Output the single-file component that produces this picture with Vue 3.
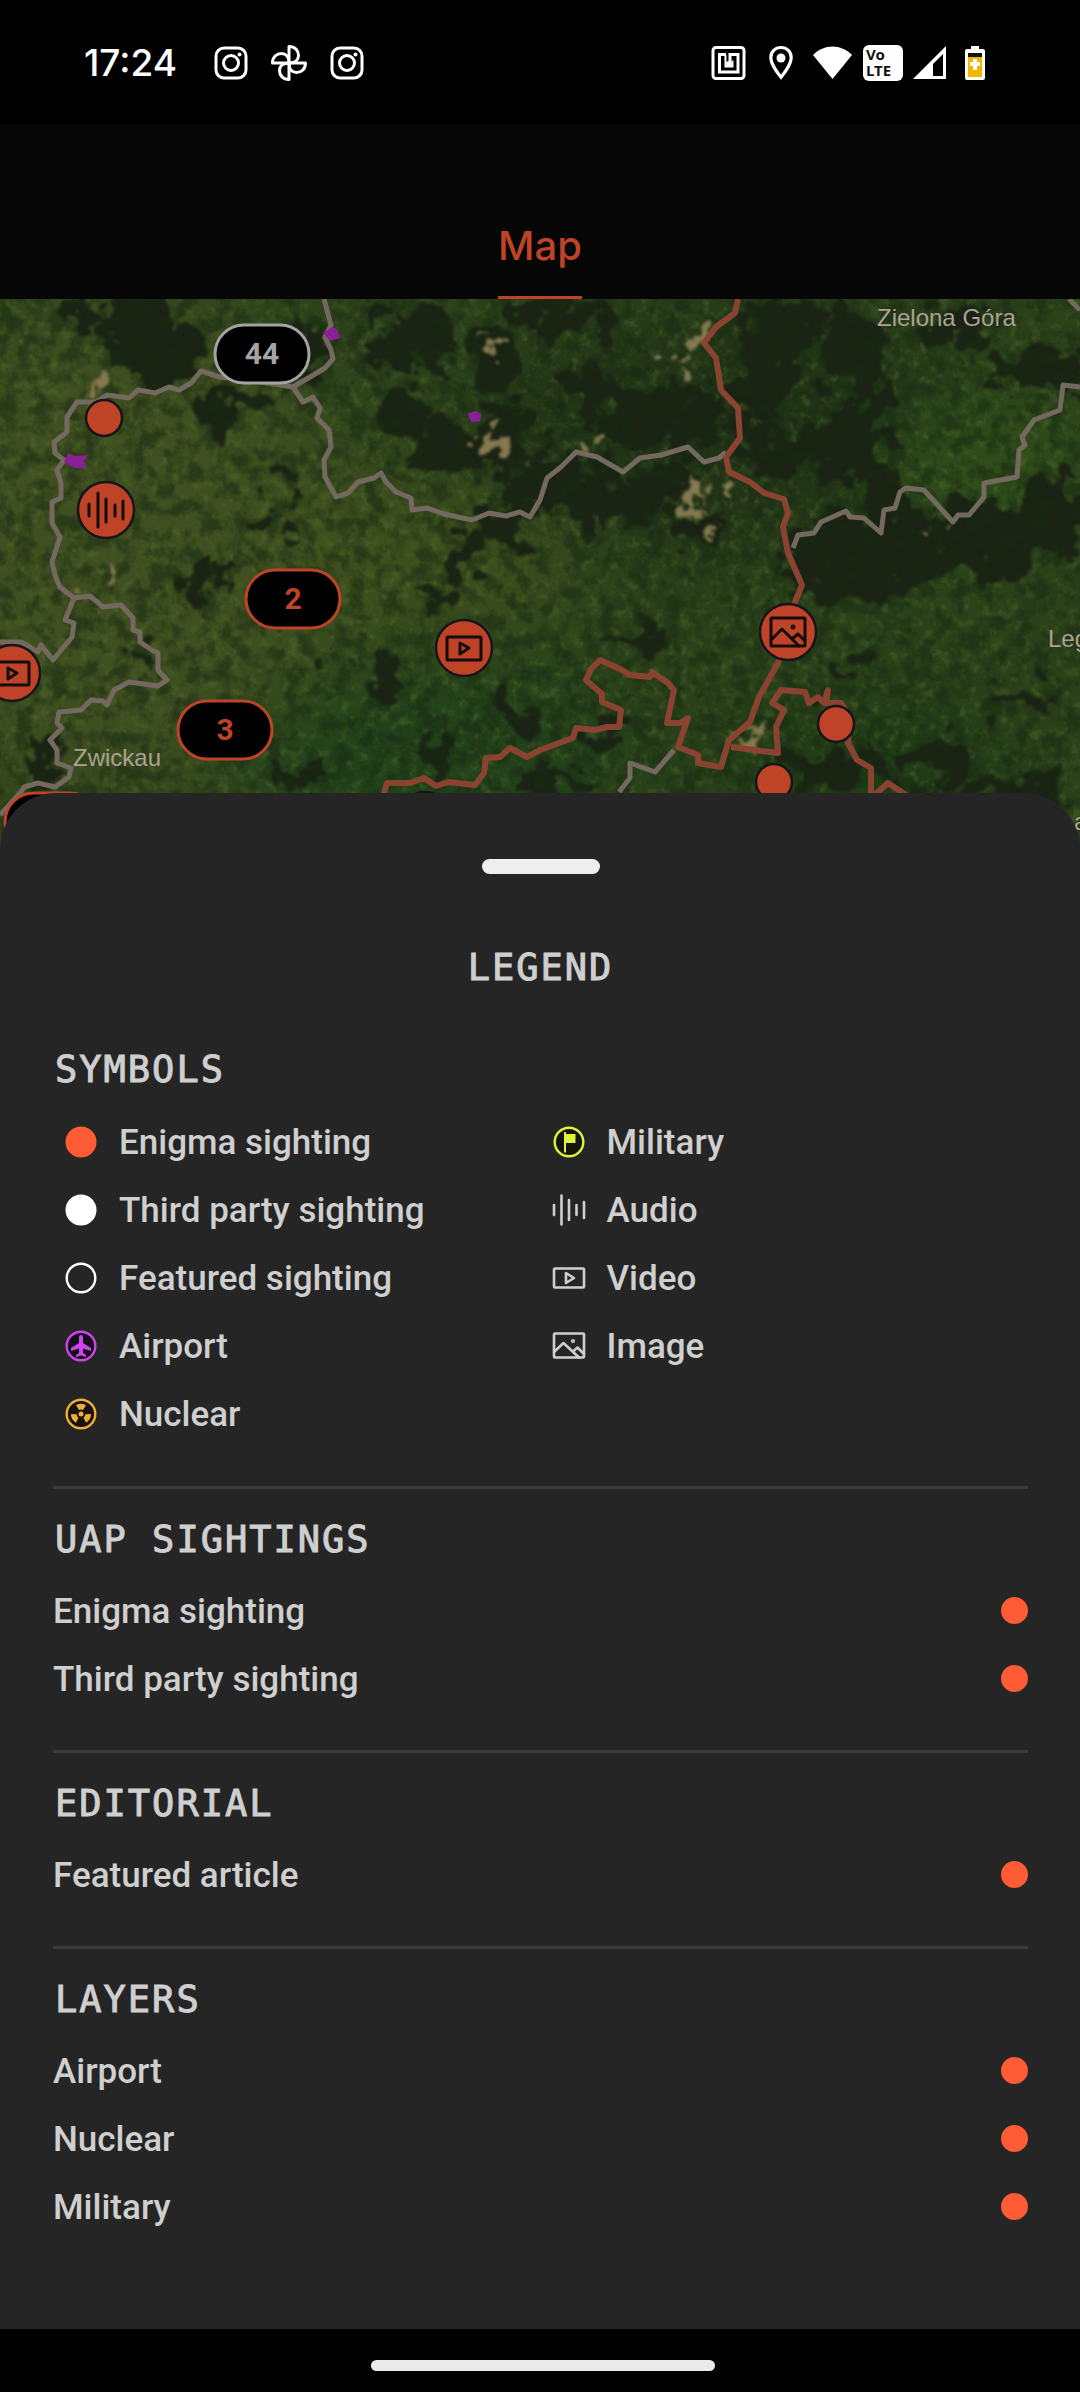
<template>
  <div class="screen">
    <header class="status-bar">
      <div class="status-left">
        <span class="clock">17:24</span>
        <svg class="app-icon" viewBox="0 0 34 34" aria-hidden="true">
          <use href="#icon-instagram" />
        </svg>
        <svg class="app-icon" viewBox="0 0 34 34" aria-hidden="true">
          <g fill="none" stroke="#fff" stroke-width="3" stroke-linejoin="round">
            <path v-for="a in [0, 90, 180, 270]" :key="a" :transform="`rotate(${a} 17 17)`" d="M17 17V0.500c6 0 9.500 4 9.500 9 0 4-3 7.500-9.500 7.500" />
          </g>
        </svg>
        <svg class="app-icon" viewBox="0 0 34 34" aria-hidden="true">
          <g id="icon-instagram" fill="none" stroke="#fff" stroke-width="3">
            <rect x="2" y="2" width="30" height="30" rx="8" />
            <circle cx="17" cy="17" r="7.500" />
            <circle cx="25.500" cy="8.500" r="2" fill="#fff" stroke="none" />
          </g>
        </svg>
      </div>
      <div class="status-right">
        <svg width="42" height="36" viewBox="0 0 42 36" aria-hidden="true">
          <g fill="none" stroke="#fff" stroke-width="3">
            <rect x="4" y="2.500" width="31" height="31" rx="3" />
            <path d="M17 9.500h-6.500v17.500h18.500v-17.500h-8v8" />
            <path d="M16.500 10v11.500h7v-6" stroke-width="2" />
          </g>
          <circle cx="20" cy="19" r="3" fill="#fff" />
        </svg>
        <svg width="40" height="36" viewBox="0 0 40 36" aria-hidden="true">
          <path d="M20 2.500c-6 0-10.200 4.500-10.200 10.200 0 7 10.200 19.500 10.200 19.500s10.200-12.500 10.200-19.500c0-5.700-4.200-10.200-10.200-10.200z" fill="none" stroke="#fff" stroke-width="3.200" />
          <circle cx="20" cy="13" r="4.500" fill="#fff" />
        </svg>
        <svg width="42" height="36" viewBox="0 0 42 36" aria-hidden="true">
          <path d="M2 10C13-1.500 30-1.500 41 10L21.500 34z" fill="#fff" />
        </svg>
        <svg width="40" height="36" viewBox="0 0 40 36" role="img">
          <rect width="40" height="36" rx="6" fill="#fff" />
          <text x="3" y="15" class="volte">Vo</text>
          <text x="3" y="31" class="volte">LTE</text>
        </svg>
        <svg width="36" height="36" viewBox="0 0 36 36" aria-hidden="true">
          <path d="M0 34L33 1v33zM20 31h10V9L20 19z" fill="#fff" fill-rule="evenodd" />
        </svg>
        <svg width="32" height="36" viewBox="0 0 32 36" aria-hidden="true">
          <path d="M12 1h8v3h4a2 2 0 0 1 2 2v27a2 2 0 0 1-2 2H8a2 2 0 0 1-2-2V6a2 2 0 0 1 2-2h4z" fill="#fff" />
          <path d="M9 8h14v4H9z" fill="#111" />
          <path d="M9 12h14v20H9z" fill="#f4b400" />
          <path d="M14 14h4v3h3v4h-3v4h-4v-4h-3v-4h3z" fill="#fff" />
        </svg>
      </div>
    </header>

    <nav class="tabs">
      <button type="button" class="tab">Map</button>
    </nav>

    <svg class="map" viewBox="0 0 1080 560" role="img" aria-label="Satellite map">
      <defs>
        <filter id="rough" x="-20%" y="-20%" width="140%" height="140%" color-interpolation-filters="sRGB">
          <feTurbulence type="fractalNoise" baseFrequency="0.035" numOctaves="4" seed="7" />
          <feDisplacementMap in="SourceGraphic" scale="75" xChannelSelector="R" yChannelSelector="G" />
          <feGaussianBlur stdDeviation="1.500" />
        </filter>
        <filter id="smooth" x="-30%" y="-30%" width="160%" height="160%" color-interpolation-filters="sRGB">
          <feGaussianBlur stdDeviation="45" />
        </filter>
        <filter id="shade" x="0" y="0" width="100%" height="100%" color-interpolation-filters="sRGB">
          <feTurbulence type="fractalNoise" baseFrequency="0.06" numOctaves="4" seed="3" />
          <feColorMatrix values="0 0 0 0 0.09  0 0 0 0 0.16  0 0 0 0 0.07  3.6 0 0 0 -1.5" />
        </filter>
        <filter id="fields" x="0" y="0" width="100%" height="100%" color-interpolation-filters="sRGB">
          <feTurbulence type="fractalNoise" baseFrequency="0.1" numOctaves="4" seed="12" />
          <feColorMatrix values="0 0 0 0 0.34  0 0 0 0 0.44  0 0 0 0 0.17  0 3.4 0 0 -1.7" />
        </filter>
      </defs>

      <rect width="1080" height="560" fill="#2b411a" />
      <g filter="url(#smooth)">
        <ellipse cx="120" cy="250" rx="240" ry="260" fill="#3f4f20" />
        <ellipse cx="420" cy="260" rx="170" ry="80" fill="#3f501e" />
        <ellipse cx="740" cy="130" rx="260" ry="110" fill="#203317" />
        <ellipse cx="980" cy="170" rx="110" ry="70" fill="#304f1a" />
        <ellipse cx="430" cy="460" rx="200" ry="90" fill="#21421a" />
        <ellipse cx="860" cy="480" rx="160" ry="60" fill="#1c3a15" />
      </g>
      <rect width="1080" height="560" filter="url(#fields)" opacity="0.4" />
      <g filter="url(#rough)" fill="#1a2314">
        <ellipse v-for="(f, i) in forests" :key="i" :cx="f[0]" :cy="f[1]" :rx="f[2]" :ry="f[3]" />
      </g>
      <rect width="1080" height="560" filter="url(#shade)" opacity="0.55" />
      <g filter="url(#rough)" fill="#85794f">
        <ellipse v-for="(q, i) in quarries" :key="i" :cx="q[0]" :cy="q[1]" :rx="q[2]" :ry="q[3]" />
      </g>

      <g class="border region">
        <polyline v-for="(line, i) in regionLines" :key="i" :points="line" />
      </g>
      <g class="border country">
        <polyline v-for="(line, i) in countryLines" :key="i" :points="line" />
      </g>

      <g fill="#8a1f96">
        <path d="M323 34l9-6 5 2 3 9-10 3z" />
        <path d="M468 114l8-2 5 3-1 7-8 1-3-4z" />
        <path d="M64 163l4-9 7 3 13-1-4 6 2 7-12 0z" />
      </g>

      <g class="place">
        <text x="877" y="27">Zielona Góra</text>
        <text x="73" y="467">Zwickau</text>
        <text x="1048" y="348">Legnica</text>
        <text x="1074" y="531">a</text>
      </g>

      <g v-for="(c, i) in clusters" :key="'c' + i" class="cluster" :class="c.tone">
        <rect :x="c.x - 47" :y="c.y - 29" width="94" height="58" rx="29" />
        <text :x="c.x" :y="c.y + 10">{{ c.count }}</text>
      </g>

      <g v-for="(p, i) in pins" :key="'p' + i" :transform="`translate(${p.x} ${p.y})`">
        <circle :r="p.icon ? 28 : 18" fill="#be4327" stroke="#15151a" stroke-width="2.500" />
        <g fill="none" stroke="#140d0b" stroke-width="3" stroke-linecap="round" stroke-linejoin="round">
          <path v-if="p.icon === 'audio'" d="M-17-6V6M-8-17V17M0-11V12M9-5V6M17-9V9" />
          <template v-else-if="p.icon === 'video'">
            <rect x="-17" y="-11" width="34" height="23" rx="1" />
            <path d="M-4-5V6L5 0z" />
          </template>
          <template v-else-if="p.icon === 'image'">
            <rect x="-17" y="-14" width="34" height="28" rx="1" />
            <path d="M-17 8L-6-3 11 14M4 7L10 2 17 9" />
            <circle cx="5" cy="-5" r="1" />
          </template>
        </g>
      </g>
    </svg>

    <main class="sheet">
      <button type="button" class="handle" aria-label="Drag legend"></button>
      <h1 class="title">LEGEND</h1>

      <section class="section symbols">
        <h2 class="heading">SYMBOLS</h2>
        <ul class="symbol-grid">
          <li v-for="s in symbols" :key="s.label" class="symbol">
            <svg class="symbol-icon" viewBox="-18 -18 36 36" aria-hidden="true">
              <circle v-if="s.icon === 'enigma'" r="15.500" fill="#ff5c35" />
              <circle v-else-if="s.icon === 'third'" r="15.500" fill="#fff" />
              <circle v-else-if="s.icon === 'featured'" r="14.300" fill="none" stroke="#fff" stroke-width="2.400" />
              <g v-else-if="s.icon === 'airport'" fill="#cb45ea">
                <circle r="14.300" fill="#150d18" stroke="#cb45ea" stroke-width="2.400" />
                <path d="M0-11c1.300 0 2 1.200 2 2.500V-3L10 2v3L2 2.500V7l3 2v2L0 9.500-5 11V9l3-2V2.500L-10 5V2l8-5v-5.500C-2-9.800-1.300-11 0-11z" />
              </g>
              <g v-else-if="s.icon === 'nuclear'" fill="#eeae3a">
                <circle r="14.300" fill="#17120a" stroke="#eeae3a" stroke-width="2.400" />
                <circle r="2.500" />
                <path v-for="a in [0, 120, 240]" :key="a" :transform="`rotate(${a})`" d="M-2-4L-5-8.700A10 10 0 0 1 5-8.700L2-4A4.500 4.500 0 0 0-2-4z" />
              </g>
              <g v-else-if="s.icon === 'military'" fill="#dff23c">
                <circle r="14.300" fill="#14150b" stroke="#dff23c" stroke-width="2.400" />
                <path d="M-5-10h2v2h9.500v9H-3v9.500h-2z" />
              </g>
              <g v-else fill="none" stroke="#cfcfcf" stroke-width="2.600" stroke-linecap="round" stroke-linejoin="round">
                <path v-if="s.icon === 'audio'" d="M-15-5V5M-7.500-14.500V14.500M0-10V10M7.500-5V5M15-8V8" />
                <template v-else-if="s.icon === 'video'">
                  <rect x="-15" y="-9.500" width="30" height="19" rx="1" />
                  <path d="M-3-5V5L5 0z" />
                </template>
                <template v-else>
                  <rect x="-15" y="-12.500" width="30" height="24" rx="1" />
                  <path d="M-15 6L-5.500-3 10 11.500M4 5.500L8.500 1.500 15 8" />
                  <circle cx="4" cy="-5" r="0.800" />
                </template>
              </g>
            </svg>
            <span>{{ s.label }}</span>
          </li>
        </ul>
      </section>

      <section v-for="group in groups" :key="group.title" class="section">
        <h2 class="heading">{{ group.title }}</h2>
        <label v-for="item in group.items" :key="item.label" class="toggle-row">
          <span class="toggle-label">{{ item.label }}</span>
          <input v-model="item.on" type="checkbox" class="toggle" />
        </label>
      </section>
    </main>

    <footer class="gesture-bar">
      <div class="gesture-pill"></div>
    </footer>
  </div>
</template>

<script setup>
import { reactive } from 'vue';

// listed column by column
const symbols = [
  { label: 'Enigma sighting', icon: 'enigma' },
  { label: 'Third party sighting', icon: 'third' },
  { label: 'Featured sighting', icon: 'featured' },
  { label: 'Airport', icon: 'airport' },
  { label: 'Nuclear', icon: 'nuclear' },
  { label: 'Military', icon: 'military' },
  { label: 'Audio', icon: 'audio' },
  { label: 'Video', icon: 'video' },
  { label: 'Image', icon: 'image' }
];

const groups = reactive([
  {
    title: 'UAP SIGHTINGS',
    items: [
      { label: 'Enigma sighting', on: true },
      { label: 'Third party sighting', on: true }
    ]
  },
  {
    title: 'EDITORIAL',
    items: [{ label: 'Featured article', on: true }]
  },
  {
    title: 'LAYERS',
    items: [
      { label: 'Airport', on: true },
      { label: 'Nuclear', on: true },
      { label: 'Military', on: true }
    ]
  }
]);

const clusters = [
  { x: 262, y: 55, count: '44', tone: 'grey' },
  { x: 293, y: 300, count: '2', tone: 'red' },
  { x: 225, y: 431, count: '3', tone: 'red' },
  { x: 52, y: 523, count: '', tone: 'red' }
];

const pins = [
  { x: 104, y: 119 },
  { x: 106, y: 211, icon: 'audio' },
  { x: 12, y: 374, icon: 'video' },
  { x: 464, y: 349, icon: 'video' },
  { x: 788, y: 333, icon: 'image' },
  { x: 836, y: 425 },
  { x: 774, y: 483 },
  { x: 425, y: 521, icon: 'video' }
];

// cx, cy, rx, ry
const forests = [
  [85, 16, 18, 18], [135, 20, 32, 26], [170, 55, 35, 34], [125, 60, 20, 18],
  [215, 115, 22, 24], [240, 100, 22, 12], [285, 175, 20, 20], [310, 60, 18, 30],
  [385, 45, 25, 26], [430, 40, 24, 34], [490, 60, 30, 34], [410, 110, 28, 22],
  [450, 150, 45, 26], [505, 140, 30, 30], [560, 15, 60, 18], [590, 90, 30, 20],
  [640, 120, 40, 30], [560, 190, 60, 30], [620, 205, 50, 24], [670, 175, 26, 22],
  [700, 120, 22, 40], [760, 90, 30, 50], [780, 30, 40, 30], [850, 50, 30, 36],
  [870, 100, 14, 50], [830, 150, 40, 30], [770, 160, 26, 22], [880, 180, 20, 40],
  [1040, 70, 60, 22], [960, 30, 40, 18], [840, 260, 55, 45], [900, 250, 40, 45],
  [990, 240, 60, 35], [1050, 215, 35, 40], [700, 230, 36, 20], [500, 230, 30, 24],
  [460, 260, 16, 30], [430, 300, 20, 16], [270, 225, 22, 12], [195, 285, 14, 20],
  [220, 275, 12, 14], [390, 385, 22, 14], [325, 353, 12, 10], [140, 355, 12, 10],
  [45, 465, 18, 14], [430, 450, 18, 18], [520, 420, 26, 12], [600, 440, 26, 14],
  [640, 340, 40, 8], [840, 380, 16, 12], [830, 470, 50, 18], [930, 460, 36, 20],
  [1020, 400, 40, 12], [1000, 490, 60, 14], [290, 480, 26, 10], [560, 480, 40, 10]
];

const quarries = [
  [700, 40, 9, 14], [690, 68, 9, 6], [662, 62, 10, 10], [602, 135, 14, 8],
  [491, 140, 12, 14], [495, 52, 8, 5], [693, 197, 18, 10], [710, 230, 10, 4],
  [930, 238, 6, 4], [752, 437, 9, 7], [98, 95, 7, 7], [103, 288, 6, 7]
];

const regionLines = [
  '324,0 331,26 325,38 331,51 333,60 325,69 310,78 293,88 262,83 220,78 201,72 191,84 179,91 169,88 155,94 138,91 129,99 107,96 96,103 77,103 67,118 67,133 54,143 55,154 64,161 57,171 61,184 61,199 52,203 52,224 60,238 52,263 55,276 60,288 74,299 90,297 103,308 121,306 133,319 133,331 140,333 140,343 152,351 158,354 158,371 167,381 158,387 129,383 114,391 107,406 103,402 91,401 81,411 59,413 57,424 62,429 50,441 57,451 57,464 71,469 69,478 55,488 38,484 24,488 21,493 0,516',
  '74,299 65,321 74,324 72,338 53,361 41,346 38,353 21,343 0,343',
  '293,88 303,103 313,98 320,109 317,119 329,131 331,148 324,161 325,178 336,198 348,194 358,183 374,179 381,174 386,183 396,193 411,199 412,211 427,209 444,215 472,221 489,214 506,217 520,213 530,218 540,201 547,179 561,168 576,153 597,158 623,173 640,159 661,156 688,148 704,163 719,159 726,153',
  '674,451 655,473 630,464 630,479 619,493',
  '793,249 798,236 814,234 821,223 846,212 850,218 864,219 881,234 884,211 895,209 900,193 906,189 924,191 953,223 958,216 969,216 984,198 984,184 1017,178 1019,151 1025,146 1022,138 1034,121 1060,111 1063,86 1080,88',
  '1069,0 1080,11'
];

const countryLines = [
  '738,0 735,14 716,28 704,44 716,59 721,91 738,109 740,139 726,158 729,173 750,183 764,194 784,200 788,214 783,228 788,254 802,286 795,303 788,331 778,364 759,398 750,423 729,441 721,468 698,464 698,456 678,448 688,419 680,424 667,424 674,391 668,384 652,373 650,378 630,376 620,370 600,361 591,370 586,381 602,395 602,403 621,411 619,428 607,428 595,431 576,429 573,439 540,451 527,458 510,449 500,458 486,459 484,474 475,486 448,483 436,487 424,479 410,484 387,484 384,494 384,510',
  '731,448 778,454 776,428 784,411 772,404 781,391 805,393 809,404 818,398 824,404 828,391 826,404 841,404 850,418 848,444 857,461 871,469 871,493 871,510',
  '870,500 888,484 906,496'
];
</script>

<style scoped>
.screen {
  min-height: 100vh;
  display: flex;
  flex-direction: column;
  background: #060606;
  color: #cfcfcf;
  font-family: Roboto, "Liberation Sans", sans-serif;
}

.status-bar {
  display: flex;
  align-items: center;
  justify-content: space-between;
  height: 124px;
  padding: 2px 89px 0 84px;
  box-sizing: border-box;
  background: #000;
}

.status-left {
  display: flex;
  align-items: center;
  gap: 24px;
}

.status-right {
  display: flex;
  align-items: center;
  gap: 10px;
}

.clock {
  margin-right: 13px;
  font-family: Inter, sans-serif;
  font-size: 37px;
  font-weight: 500;
  line-height: 44px;
  color: #fff;
}

.app-icon {
  width: 34px;
  height: 34px;
  overflow: visible;
}

.volte {
  font-family: "Noto Sans", sans-serif;
  font-size: 15px;
  font-weight: 700;
  fill: #111;
}

.tabs {
  display: flex;
  justify-content: center;
  align-items: flex-end;
  height: 175px;
}

.tab {
  padding: 0 0 26px;
  border: 0;
  border-bottom: 3px solid #be4327;
  background: none;
  color: #be4327;
  font-family: Inter, sans-serif;
  font-size: 40px;
  font-weight: 500;
  line-height: 48px;
}

.map {
  display: block;
  width: 100%;
}

.border {
  fill: none;
  stroke-linejoin: round;
}

.region {
  stroke: #74695f;
  stroke-width: 5;
}

.country {
  stroke: #8a4330;
  stroke-width: 6;
}

.place {
  font-family: "Liberation Sans", Arial, sans-serif;
  font-size: 24px;
  fill: #aca193;
}

.cluster rect {
  fill: #000;
  stroke-width: 3;
}

.cluster text {
  font-size: 30px;
  font-weight: 700;
  text-anchor: middle;
}

.cluster.grey rect {
  stroke: #a3a3a3;
}

.cluster.grey text {
  fill: #a3a3a3;
}

.cluster.red rect {
  stroke: #be4327;
}

.cluster.red text {
  fill: #be4327;
}

.sheet {
  position: relative;
  flex: 1;
  display: flex;
  flex-direction: column;
  margin-top: -66px;
  padding: 66px 52px 46px 53px;
  border-radius: 56px 56px 0 0;
  background: #252525;
}

.handle {
  align-self: center;
  width: 118px;
  height: 15px;
  padding: 0;
  border: 0;
  border-radius: 8px;
  background: #f0eded;
}

.title,
.heading {
  margin: 0;
  font-family: "DejaVu Sans Mono", monospace;
  font-size: 37px;
  font-weight: 400;
  line-height: 48px;
  letter-spacing: 2px;
  -webkit-text-stroke: 1px currentColor;
}

.title {
  margin: 70px 0 54px;
  text-align: center;
}

.section {
  padding: 27px 0 38px;
  border-bottom: 3px solid #3a3a3a;
}

.section:last-child {
  border-bottom: 0;
}

.heading {
  margin-bottom: 12px;
  padding-left: 2px;
}

.symbols {
  padding-top: 0;
}

.symbols .heading {
  margin-bottom: 14px;
}

.symbol-grid {
  display: grid;
  grid-template-columns: 1fr 1fr;
  grid-template-rows: repeat(5, 68px);
  grid-auto-flow: column;
  margin: 0;
  padding: 0;
  list-style: none;
}

.symbol {
  display: flex;
  align-items: center;
  gap: 20px;
  padding-left: 10px;
  font-size: 35px;
  font-weight: 500;
}

.symbol-icon {
  width: 36px;
  height: 36px;
}

.toggle-row {
  display: flex;
  align-items: center;
  justify-content: space-between;
  height: 68px;
  font-size: 35px;
  font-weight: 500;
}

.toggle-label {
  padding-top: 2px;
}

.toggle {
  appearance: none;
  width: 27px;
  height: 27px;
  margin: 0;
  border: 2px solid #ff5c35;
  border-radius: 50%;
  box-sizing: border-box;
}

.toggle:checked {
  background: #ff5c35;
}

.gesture-bar {
  display: flex;
  justify-content: center;
  align-items: center;
  height: 63px;
  padding: 10px 0 0 6px;
  box-sizing: border-box;
  background: #000;
}

.gesture-pill {
  width: 32%;
  height: 11px;
  border-radius: 6px;
  background: #ebebeb;
}
</style>

<style>
body {
  background: #000;
}
</style>
